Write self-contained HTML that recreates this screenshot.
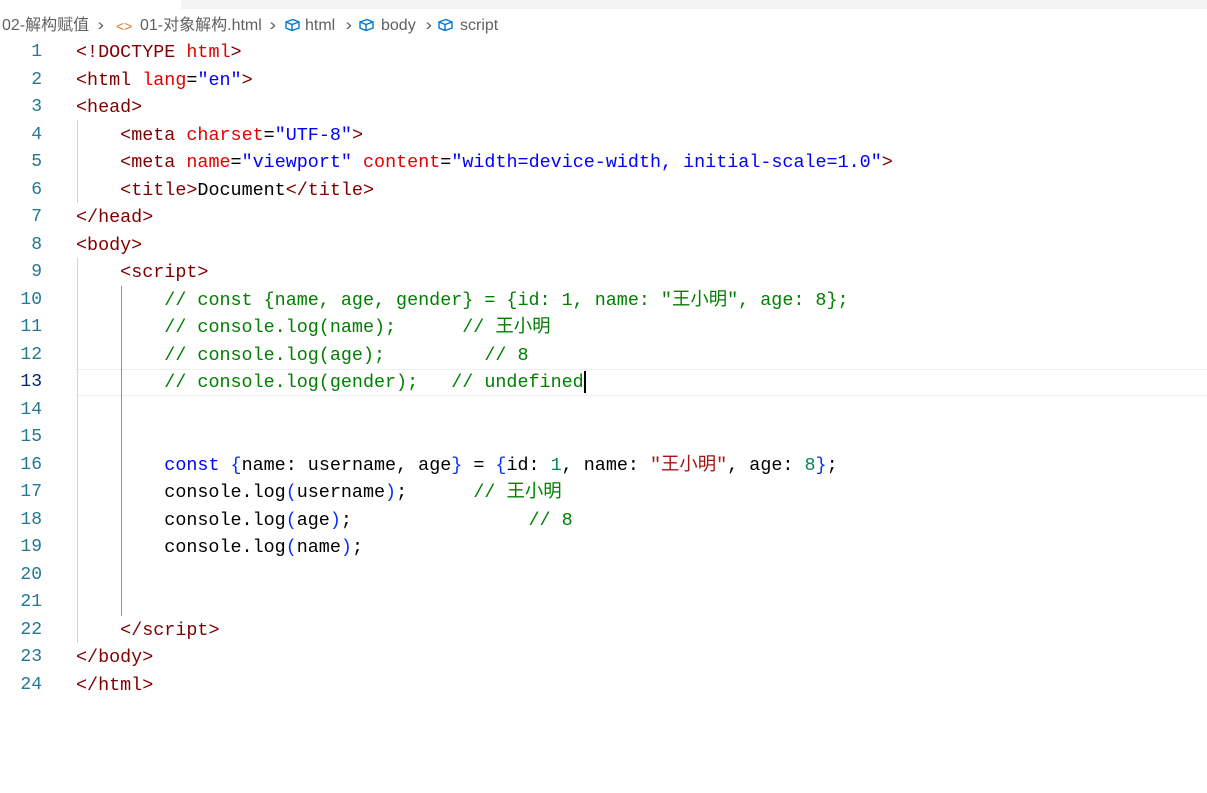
<!DOCTYPE html>
<html><head><meta charset="utf-8"><style>
html,body{margin:0;padding:0;background:#fff;width:1207px;height:793px;overflow:hidden;position:relative}
.top{position:absolute;left:181px;top:0;width:1026px;height:9px;background:#f3f3f3}
.bc{position:absolute;top:16px;font:16px "Liberation Sans","Noto Sans CJK SC",sans-serif;color:#616161;white-space:pre;line-height:20px}
.sep{position:absolute;top:15px;font:17px "Liberation Sans",sans-serif;color:#616161;transform:scaleX(1.2)}
.ic{position:absolute;top:18px}
.cur{position:absolute;left:76px;top:369px;width:1131px;height:25px;border-top:1px solid #eee;border-bottom:1px solid #eee}
.guide{position:absolute;width:1px;background:#d3d3d3}
.ln{position:absolute;left:0;width:42px;text-align:right;font:18px "Liberation Mono",monospace;color:#237893;height:27.5px;line-height:27.5px}
.l{position:absolute;left:76px;font:18.4px "Liberation Mono","Noto Sans CJK SC",monospace;white-space:pre;height:27.5px;line-height:27.5px;color:#000}
.t{color:#800000}.a{color:#e50000}.s1{color:#0000ff}.c{color:#008000}.k{color:#0000ff}.b{color:#0431fa}.n{color:#098658}.r{color:#a31515}
.caret{display:inline-block;width:2px;height:22px;background:#000;vertical-align:middle}
.w{position:absolute;left:0;top:2px;width:1207px;height:793px}
</style></head><body>
<div class="top"></div>
<div class="bc" style="left:2px">02-解构赋值</div>
<div class="sep" style="left:98px">›</div>
<div class="bc" style="left:116px;color:#e37933;font-size:14px">&lt;&gt;</div>
<div class="bc" style="left:140px">01-对象解构.html</div>
<div class="sep" style="left:270px">›</div>
<svg class="ic" style="left:284px" width="17" height="14" viewBox="0 0 17 14"><path d="M2 4 L9 1.5 L15 4 L15 10 L8 12.5 L2 10Z M2 4 L8 6.5 L15 4 M8 6.5 L8 12.5" fill="none" stroke="#0078d4" stroke-width="1.4"/></svg>
<div class="bc" style="left:305px">html</div>
<div class="sep" style="left:346px">›</div>
<svg class="ic" style="left:358px" width="17" height="14" viewBox="0 0 17 14"><path d="M2 4 L9 1.5 L15 4 L15 10 L8 12.5 L2 10Z M2 4 L8 6.5 L15 4 M8 6.5 L8 12.5" fill="none" stroke="#0078d4" stroke-width="1.4"/></svg>
<div class="bc" style="left:381px">body</div>
<div class="sep" style="left:426px">›</div>
<svg class="ic" style="left:437px" width="17" height="14" viewBox="0 0 17 14"><path d="M2 4 L9 1.5 L15 4 L15 10 L8 12.5 L2 10Z M2 4 L8 6.5 L15 4 M8 6.5 L8 12.5" fill="none" stroke="#0078d4" stroke-width="1.4"/></svg>
<div class="bc" style="left:460px">script</div>
<div class="cur"></div>
<div class="w">
<div class="guide" style="left:77px;top:118px;height:83px"></div>
<div class="guide" style="left:77px;top:256px;height:385px"></div>
<div class="guide" style="left:121px;top:284px;height:330px;background:#939393"></div>

<div class="ln" style="top:37px">1</div><div class="l" style="top:37px"><span class="t">&lt;!DOCTYPE</span> <span class="a">html</span><span class="t">&gt;</span></div>
<div class="ln" style="top:64.5px">2</div><div class="l" style="top:64.5px"><span class="t">&lt;html</span> <span class="a">lang</span>=<span class="s1">"en"</span><span class="t">&gt;</span></div>
<div class="ln" style="top:92px">3</div><div class="l" style="top:92px"><span class="t">&lt;head&gt;</span></div>
<div class="ln" style="top:119.5px">4</div><div class="l" style="top:119.5px">    <span class="t">&lt;meta</span> <span class="a">charset</span>=<span class="s1">"UTF-8"</span><span class="t">&gt;</span></div>
<div class="ln" style="top:147px">5</div><div class="l" style="top:147px">    <span class="t">&lt;meta</span> <span class="a">name</span>=<span class="s1">"viewport"</span> <span class="a">content</span>=<span class="s1">"width=device-width, initial-scale=1.0"</span><span class="t">&gt;</span></div>
<div class="ln" style="top:174.5px">6</div><div class="l" style="top:174.5px">    <span class="t">&lt;title&gt;</span>Document<span class="t">&lt;/title&gt;</span></div>
<div class="ln" style="top:202px">7</div><div class="l" style="top:202px"><span class="t">&lt;/head&gt;</span></div>
<div class="ln" style="top:229.5px">8</div><div class="l" style="top:229.5px"><span class="t">&lt;body&gt;</span></div>
<div class="ln" style="top:257px">9</div><div class="l" style="top:257px">    <span class="t">&lt;script&gt;</span></div>
<div class="ln" style="top:284.5px">10</div><div class="l" style="top:284.5px">        <span class="c">// const {name, age, gender} = {id: 1, name: "王小明", age: 8};</span></div>
<div class="ln" style="top:312px">11</div><div class="l" style="top:312px">        <span class="c">// console.log(name);      // 王小明</span></div>
<div class="ln" style="top:339.5px">12</div><div class="l" style="top:339.5px">        <span class="c">// console.log(age);         // 8</span></div>
<div class="ln" style="top:367px;color:#0b216f">13</div><div class="l" style="top:367px">        <span class="c">// console.log(gender);   // undefined</span><span class="caret"></span></div>
<div class="ln" style="top:394.5px">14</div>
<div class="ln" style="top:422px">15</div>
<div class="ln" style="top:449.5px">16</div><div class="l" style="top:449.5px">        <span class="k">const</span> <span class="b">{</span>name: username, age<span class="b">}</span> = <span class="b">{</span>id: <span class="n">1</span>, name: <span class="r">"王小明"</span>, age: <span class="n">8</span><span class="b">}</span>;</div>
<div class="ln" style="top:477px">17</div><div class="l" style="top:477px">        console.log<span class="b">(</span>username<span class="b">)</span>;      <span class="c">// 王小明</span></div>
<div class="ln" style="top:504.5px">18</div><div class="l" style="top:504.5px">        console.log<span class="b">(</span>age<span class="b">)</span>;                <span class="c">// 8</span></div>
<div class="ln" style="top:532px">19</div><div class="l" style="top:532px">        console.log<span class="b">(</span>name<span class="b">)</span>;</div>
<div class="ln" style="top:559.5px">20</div>
<div class="ln" style="top:587px">21</div>
<div class="ln" style="top:614.5px">22</div><div class="l" style="top:614.5px">    <span class="t">&lt;/script&gt;</span></div>
<div class="ln" style="top:642px">23</div><div class="l" style="top:642px"><span class="t">&lt;/body&gt;</span></div>
<div class="ln" style="top:669.5px">24</div><div class="l" style="top:669.5px"><span class="t">&lt;/html&gt;</span></div>
</div>
</body></html>
